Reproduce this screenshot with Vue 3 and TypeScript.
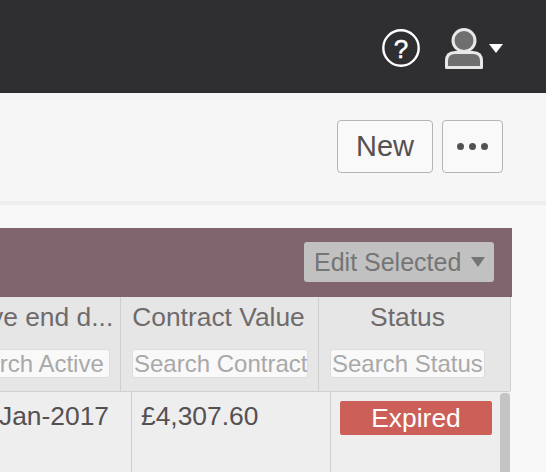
<template>
  <div class="page">
    <!-- top bar -->
    <header class="topbar">
      <svg class="help" width="38" height="38" viewBox="0 0 38 38">
        <circle cx="19" cy="19" r="17.7" fill="none" stroke="#fff" stroke-width="2.4" />
        <text x="19" y="29" text-anchor="middle" class="help-mark">?</text>
      </svg>
      <svg class="user" width="40" height="42" viewBox="0 0 40 42">
        <path d="M2.5 39.5 V33 Q2.5 24.5 11 24.5 H29 Q37.5 24.5 37.5 33 V39.5 Z" fill="#6f6f6f" stroke="#e8e8e8" stroke-width="3" stroke-linejoin="round" />
        <circle cx="20" cy="12.5" r="11" fill="#6f6f6f" stroke="#e8e8e8" stroke-width="3" />
      </svg>
      <span class="caret"></span>
    </header>

    <!-- toolbar -->
    <div class="toolbar">
      <button class="btn new">New</button>
      <button class="btn more">
        <i></i><i></i><i></i>
      </button>
    </div>

    <!-- table panel -->
    <section class="panel">
      <div class="panel-head">
        <div class="edit">
          <span>Edit Selected</span>
          <b class="edit-caret"></b>
        </div>
      </div>

      <div class="thead">
        <div v-for="col in columns" :key="col.title" class="th" :class="col.cls">
          <div class="th-title">{{ col.title }}</div>
          <input class="search" :placeholder="col.search" />
        </div>
      </div>

      <div class="tbody">
        <div class="td date">01-Jan-2017</div>
        <div class="td value">£4,307.60</div>
        <div class="td state"><span class="badge">Expired</span></div>
        <div class="scroll"></div>
      </div>
    </section>
  </div>
</template>

<script setup lang="ts">
const columns = [
  { title: 'Active end d...', search: 'Search Active', cls: 'c-active' },
  { title: 'Contract Value', search: 'Search Contract', cls: 'c-value' },
  { title: 'Status', search: 'Search Status', cls: 'c-status' }
]
</script>

<style>
html, body {
  margin: 0;
  overflow: hidden;
  background: #f7f7f7;
}
</style>

<style scoped>
.page {
  width: 546px;
  height: 472px;
  overflow: hidden;
  background: #f8f8f8;
  font-family: "Liberation Sans", Arial, sans-serif;
  color: #555052;
}

.topbar {
  height: 93px;
  background: #2f2f31;
  display: flex;
  align-items: center;
  justify-content: flex-end;
  padding-right: 43px;
  box-sizing: border-box;
}

.help {
  margin: 3px 24px 0 0;
}

.help-mark {
  font: 26px "Liberation Sans", Arial, sans-serif;
  fill: #fff;
  stroke: #fff;
  stroke-width: 0.5px;
}

.user {
  margin-top: 5px;
}

.caret {
  width: 0;
  height: 0;
  margin: 3px 0 0 5px;
  border-left: 7px solid transparent;
  border-right: 7px solid transparent;
  border-top: 9px solid #fff;
}

.toolbar {
  height: 112px;
  box-sizing: border-box;
  display: flex;
  justify-content: flex-end;
  align-items: flex-start;
  gap: 9px;
  padding: 27px 43px 0 0;
  background: #f6f6f6;
  border-bottom: 4px solid #efefef;
}

.btn {
  height: 53px;
  box-sizing: border-box;
  background: #f9f9f9;
  border: 1px solid #b5b5b5;
  border-radius: 4px;
  color: #555052;
  font: 29px "Liberation Sans", Arial, sans-serif;
  padding: 0;
}

.new {
  width: 96px;
}

.more {
  width: 61px;
  display: flex;
  align-items: center;
  justify-content: center;
  gap: 4.5px;
}

.more i {
  width: 7.5px;
  height: 7.5px;
  border-radius: 50%;
  background: #555052;
}

.panel {
  margin: 23px 34px 0 -60px;
}

.panel-head {
  height: 69px;
  background: #80656f;
  display: flex;
  align-items: flex-start;
  justify-content: flex-end;
  padding: 14px 18px 0 0;
  box-sizing: border-box;
}

.edit {
  width: 190px;
  height: 40px;
  box-sizing: border-box;
  background: #c1c1c1;
  border-radius: 3px;
  display: flex;
  align-items: center;
  justify-content: space-between;
  padding: 0 9px 0 10px;
  color: #757575;
  font-size: 25px;
}

.edit-caret {
  width: 0;
  height: 0;
  border-left: 7px solid transparent;
  border-right: 7px solid transparent;
  border-top: 10px solid #757575;
}

.thead {
  display: grid;
  grid-template-columns: 181px 198px 192px;
  height: 95px;
  background: #e6e6e6;
  border-bottom: 1px solid #d0d0d0;
  box-sizing: border-box;
  margin-right: 2px;
}

.th {
  border-right: 1px solid #cfcfcf;
  box-sizing: border-box;
  padding: 0 10px 0 11px;
  text-align: center;
  overflow: hidden;
}

.c-status {
  padding-right: 25px;
}

.th-title {
  margin-top: 2px;
  height: 36px;
  line-height: 36px;
  font-size: 26.4px;
  color: #6f6b6c;
  white-space: nowrap;
  overflow: hidden;
}

.c-active .th-title {
  text-align: left;
  margin-left: -5px;
  margin-right: -10px;
}

.c-value .th-title {
  margin-left: -5px;
  margin-right: -2px;
}

.search {
  display: block;
  width: 100%;
  height: 29px;
  margin-top: 14px;
  box-sizing: border-box;
  border: 1px solid #ddd;
  border-radius: 3px;
  background: #f9f9f9;
  padding: 0 0 0 1px;
  font: 24px "Liberation Sans", Arial, sans-serif;
  outline: none;
}

.c-active .search {
  padding-left: 5px;
}

.search::placeholder {
  color: #a9a9a9;
  opacity: 1;
}

.tbody {
  position: relative;
  display: grid;
  grid-template-columns: 192px 199px 1fr;
  height: 90px;
  background: #eeeeee;
  margin-right: 2px;
}

.td {
  font-size: 26.4px;
  line-height: 30px;
  padding-top: 9px;
  box-sizing: border-box;
  white-space: nowrap;
  border-right: 1px solid #cfcfcf;
  overflow: hidden;
}

.date {
  text-align: right;
  padding-right: 22px;
}

.value {
  padding-left: 9px;
}

.state {
  border-right: 0;
  padding: 9px 0 0 9px;
}

.badge {
  display: block;
  width: 152px;
  height: 34px;
  line-height: 34px;
  background: #cc5f58;
  border-radius: 2px;
  color: #fff;
  text-align: center;
}

.scroll {
  position: absolute;
  top: 1px;
  right: 0;
  width: 10px;
  height: 100%;
  background: #c4c4c4;
  border-radius: 4px 4px 0 0;
}
</style>
